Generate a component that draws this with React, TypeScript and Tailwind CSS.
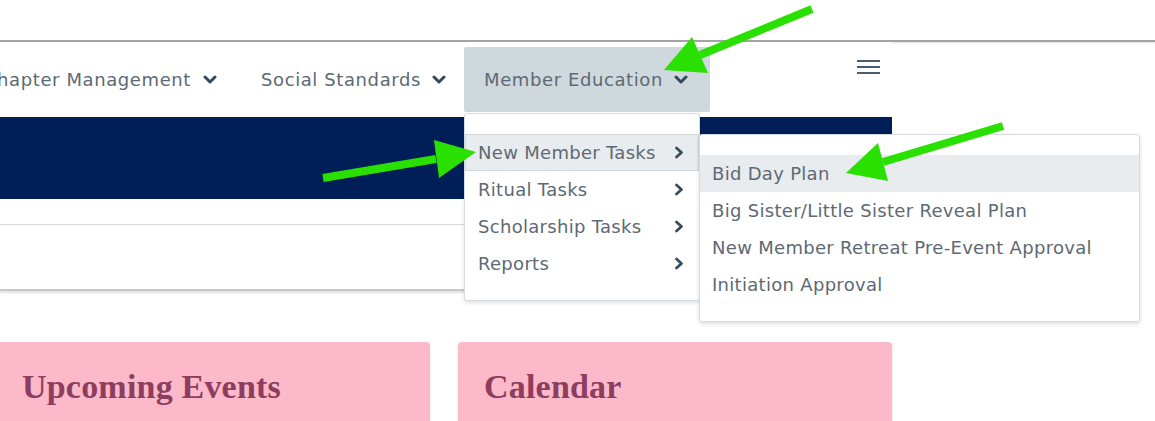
import React from "react";

const ChevronDown = () => (
  <svg width="14" height="9" viewBox="0 0 14 9" className="shrink-0">
    <polyline points="2,2 7,7 12,2" fill="none" stroke="#344a5a" strokeWidth="3" strokeLinecap="round" strokeLinejoin="round" />
  </svg>
);

const ChevronRight = () => (
  <svg width="10" height="13" viewBox="0 0 10 13" className="shrink-0">
    <polyline points="2.5,2 7.5,6.5 2.5,11" fill="none" stroke="#3a4c59" strokeWidth="2.8" strokeLinecap="round" strokeLinejoin="round" />
  </svg>
);

const menu1 = ["New Member Tasks", "Ritual Tasks", "Scholarship Tasks", "Reports"];
const menu2 = [
  "Bid Day Plan",
  "Big Sister/Little Sister Reveal Plan",
  "New Member Retreat Pre-Event Approval",
  "Initiation Approval",
];

export default function App() {
  return (
    <div className="relative h-[421px] w-[1155px] overflow-hidden bg-white font-['DejaVu_Sans',sans-serif] text-[18px] text-[#5d6973]">
      <div className="h-[40px] bg-white" />
      <div className="h-[2px] bg-[#a3a3a3] shadow-[0_1px_2px_rgba(0,0,0,0.12)]" />
      <div className="w-[892px]">
        <nav className="relative z-10 flex h-[75px] items-center bg-white tracking-[0.6px]">
          <div className="flex h-[65px] w-[238px] items-center justify-end gap-[12px] whitespace-nowrap pr-[21px]">
            <span>Chapter Management</span>
            <ChevronDown />
          </div>
          <div className="ml-[3px] flex h-[65px] w-[220px] items-center gap-[11px] whitespace-nowrap pl-[20px]">
            <span>Social Standards</span>
            <ChevronDown />
          </div>
          <div className="relative ml-[3px] h-[65px]">
            <div className="flex h-[65px] w-[246px] items-center gap-[11px] whitespace-nowrap rounded-[2px] bg-[#cfd8dd] pl-[20px]">
              <span>Member Education</span>
              <ChevronDown />
            </div>
            <div className="absolute left-0 top-[66px] w-[236px] rounded-[3px] border border-[#d5dce1] bg-white pb-[18px] pt-[20px] tracking-[0.3px] shadow-[0_2px_4px_rgba(0,0,0,0.12)]">
              {menu1.map((m, i) => (
                <div
                  key={m}
                  className={
                    i === 0
                      ? "flex h-[37px] items-center justify-between whitespace-nowrap border border-[#d2d8dc] bg-[#e9ecef] pb-[1px] pl-[12px] pr-[14px]"
                      : "flex h-[37px] items-center justify-between whitespace-nowrap pb-[1px] pl-[13px] pr-[15px]"
                  }
                >
                  <span>{m}</span>
                  <ChevronRight />
                </div>
              ))}
              <div className="absolute left-[234px] top-[20px] w-[441px] rounded-[3px] border border-[#d5dce1] bg-white pb-[18px] pt-[20px] shadow-[0_2px_4px_rgba(0,0,0,0.14)]">
                {menu2.map((m, i) => (
                  <div
                    key={m}
                    className={
                      i === 0
                        ? "flex h-[37px] items-center whitespace-nowrap bg-[#e9ecef] pb-[1px] pl-[12px]"
                        : "flex h-[37px] items-center whitespace-nowrap pb-[1px] pl-[12px]"
                    }
                  >
                    {m}
                  </div>
                ))}
              </div>
            </div>
          </div>
          <div className="ml-auto mr-[12px] flex flex-col gap-[4px] self-start pt-[18px]">
            <div className="h-[2px] w-[23px] bg-[#4a5d6b]" />
            <div className="h-[2px] w-[23px] bg-[#4a5d6b]" />
            <div className="h-[2px] w-[23px] bg-[#4a5d6b]" />
          </div>
        </nav>
        <div className="h-[82px] bg-[#001e58]" />
        <div className="h-[25px]" />
        <div className="h-[67px] border-b-2 border-t border-b-[#c8c8c8] border-t-[#dadada] bg-white shadow-[0_2px_2px_rgba(0,0,0,0.12)]" />
        <div className="h-[51px]" />
        <div className="-ml-[4px] flex gap-[28px]">
          <div className="h-[100px] w-[434px] rounded-t-[4px] bg-[#fbb9c9] pl-[26px] pt-[24px] shadow-[0_1px_3px_rgba(0,0,0,0.12)]">
            <h2 className="font-['Liberation_Serif',serif] text-[34px] font-bold leading-[42px] tracking-[0.2px] text-[#8e3d5e]">
              Upcoming Events
            </h2>
          </div>
          <div className="h-[100px] w-[434px] rounded-t-[4px] bg-[#fbb9c9] pl-[26px] pt-[24px] shadow-[0_1px_3px_rgba(0,0,0,0.12)]">
            <h2 className="font-['Liberation_Serif',serif] text-[34px] font-bold leading-[42px] tracking-[0.2px] text-[#8e3d5e]">
              Calendar
            </h2>
          </div>
        </div>
      </div>
      <svg className="pointer-events-none absolute left-0 top-0 z-20" width="1155" height="421" viewBox="0 0 1155 421">
        <g fill="#29e000" stroke="#29e000">
          <line x1="812" y1="9" x2="700" y2="55" strokeWidth="8" />
          <polygon points="664,70 692,37 708,73" strokeWidth="0" />
          <line x1="323" y1="178" x2="436" y2="159" strokeWidth="8" />
          <polygon points="476,152 434,140 439,178" strokeWidth="0" />
          <line x1="1003" y1="126" x2="883" y2="162" strokeWidth="8" />
          <polygon points="846,173 878,143 888,181" strokeWidth="0" />
        </g>
      </svg>
    </div>
  );
}
